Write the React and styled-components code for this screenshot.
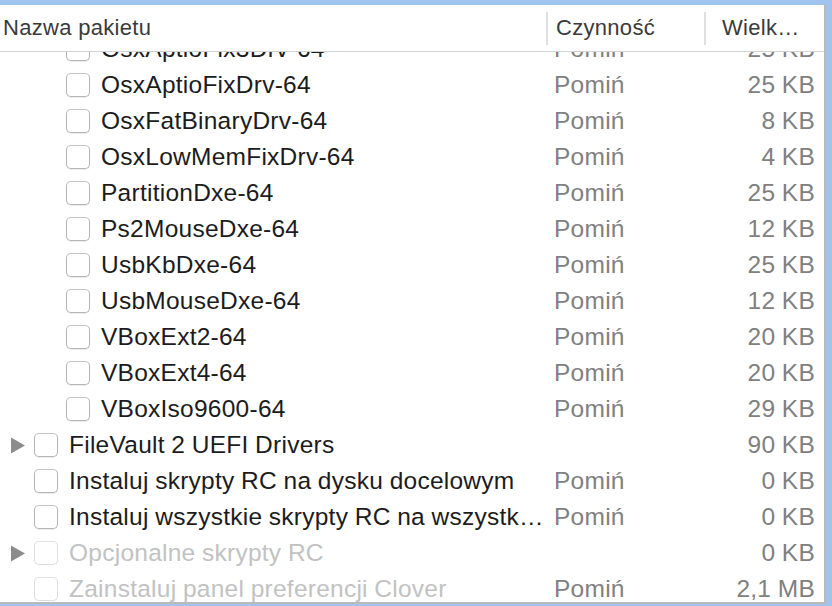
import React, { useLayoutEffect, useRef } from 'react'
import styled, { createGlobalStyle } from 'styled-components'

const GlobalStyle = createGlobalStyle`
  html, body {
    margin: 0;
    padding: 0;
    background: #a0c4ee;
  }
  body {
    font-family: "Liberation Sans", Arial, sans-serif;
    -webkit-font-smoothing: antialiased;
  }
`

const packages = [
  { name: 'OsxAptioFix3Drv-64', action: 'Pomiń', size: '25 KB', level: 2 },
  { name: 'OsxAptioFixDrv-64', action: 'Pomiń', size: '25 KB', level: 2 },
  { name: 'OsxFatBinaryDrv-64', action: 'Pomiń', size: '8 KB', level: 2 },
  { name: 'OsxLowMemFixDrv-64', action: 'Pomiń', size: '4 KB', level: 2 },
  { name: 'PartitionDxe-64', action: 'Pomiń', size: '25 KB', level: 2 },
  { name: 'Ps2MouseDxe-64', action: 'Pomiń', size: '12 KB', level: 2 },
  { name: 'UsbKbDxe-64', action: 'Pomiń', size: '25 KB', level: 2 },
  { name: 'UsbMouseDxe-64', action: 'Pomiń', size: '12 KB', level: 2 },
  { name: 'VBoxExt2-64', action: 'Pomiń', size: '20 KB', level: 2 },
  { name: 'VBoxExt4-64', action: 'Pomiń', size: '20 KB', level: 2 },
  { name: 'VBoxIso9600-64', action: 'Pomiń', size: '29 KB', level: 2 },
  { name: 'FileVault 2 UEFI Drivers', action: '', size: '90 KB', level: 1, group: true },
  { name: 'Instaluj skrypty RC na dysku docelowym', action: 'Pomiń', size: '0 KB', level: 1 },
  { name: 'Instaluj wszystkie skrypty RC na wszystk…', action: 'Pomiń', size: '0 KB', level: 1 },
  { name: 'Opcjonalne skrypty RC', action: '', size: '0 KB', level: 1, group: true, disabled: true },
  { name: 'Zainstaluj panel preferencji Clover', action: 'Pomiń', size: '2,1 MB', level: 1, disabled: true },
]

export default function App() {
  const bodyRef = useRef(null)

  // the list is scrolled a little, so the first row sits under the header
  useLayoutEffect(() => {
    if (bodyRef.current) bodyRef.current.scrollTop = 21
  }, [])

  return (
    <>
      <GlobalStyle />
      <Style.Frame>
        <Style.Window>
          <Style.Header>
            <Style.HeadCell $width="546px" $pad="3px">Nazwa pakietu</Style.HeadCell>
            <Style.HeadCell $width="158px" $pad="10px" $divider>Czynność</Style.HeadCell>
            <Style.HeadCell $flex $pad="18px" $divider>Wielk…</Style.HeadCell>
          </Style.Header>
          <Style.Body ref={bodyRef}>
            {packages.map((p) => (
              <Style.Row key={p.name}>
                <Style.NameCell $level={p.level}>
                  <Style.Disclosure>{p.group ? <Triangle /> : null}</Style.Disclosure>
                  <Style.Checkbox $disabled={p.disabled} />
                  <Style.Name $disabled={p.disabled}>{p.name}</Style.Name>
                </Style.NameCell>
                <Style.ActionCell>{p.action}</Style.ActionCell>
                <Style.SizeCell>{p.size}</Style.SizeCell>
              </Style.Row>
            ))}
          </Style.Body>
        </Style.Window>
      </Style.Frame>
    </>
  )
}

const Triangle = () => (
  <svg width="16" height="17" viewBox="0 0 16 17">
    <path d="M1 0.5 L15 8.5 L1 16.5 Z" fill="#8c8c8c" />
  </svg>
)

const Style = {}

Style.Frame = styled.div`
  width: 832px;
  height: 606px;
  box-sizing: border-box;
  padding: 5px 6px 2px 0;
  background: #a0c4ee;
`

Style.Window = styled.div`
  height: 100%;
  box-sizing: border-box;
  background: #ffffff;
  border-right: 2px solid #bababa;
  border-bottom: 2px solid #bababa;
  display: flex;
  flex-direction: column;
  overflow: hidden;
`

Style.Header = styled.div`
  display: flex;
  height: 46px;
  flex-shrink: 0;
  border-bottom: 1px solid #d2d2d2;
  background: #ffffff;
`

Style.HeadCell = styled.div`
  position: relative;
  box-sizing: border-box;
  ${(p) => (p.$flex ? 'flex: 1;' : `width: ${p.$width}; flex-shrink: 0;`)}
  padding-left: ${(p) => p.$pad};
  display: flex;
  align-items: center;
  font-size: 22px;
  letter-spacing: 0.3px;
  color: #3a3a3a;
  white-space: nowrap;
  &::before {
    content: '';
    display: ${(p) => (p.$divider ? 'block' : 'none')};
    position: absolute;
    left: 0;
    top: 7px;
    bottom: 6px;
    width: 2px;
    background: #e0e0e0;
  }
`

Style.Body = styled.div`
  flex: 1;
  overflow: hidden;
`

Style.Row = styled.div`
  display: flex;
  align-items: center;
  height: 36px;
  font-size: 24.5px;
  letter-spacing: 0.25px;
  word-spacing: -0.5px;
  white-space: nowrap;
`

Style.NameCell = styled.div`
  width: 546px;
  flex-shrink: 0;
  box-sizing: border-box;
  display: flex;
  align-items: center;
  padding-left: ${(p) => 10 + (p.$level - 1) * 32}px;
  overflow: hidden;
`

Style.Disclosure = styled.div`
  width: 24px;
  height: 36px;
  flex-shrink: 0;
  display: flex;
  align-items: center;
`

Style.Checkbox = styled.div`
  width: 22px;
  height: 22px;
  flex-shrink: 0;
  border-radius: 5px;
  border: 1px solid ${(p) => (p.$disabled ? '#dcdcdc' : '#b4b4b4')};
  border-top-color: ${(p) => (p.$disabled ? '#e2e2e2' : '#c4c4c4')};
  background: #ffffff;
  box-shadow: ${(p) => (p.$disabled ? 'none' : '0 1px 1px rgba(0, 0, 0, 0.08)')};
  margin-right: 11px;
`

Style.Name = styled.span`
  color: ${(p) => (p.$disabled ? '#c2c2c2' : '#1c1c1c')};
  overflow: hidden;
`

Style.ActionCell = styled.div`
  width: 158px;
  flex-shrink: 0;
  box-sizing: border-box;
  padding-left: 8px;
  color: #808080;
`

Style.SizeCell = styled.div`
  flex: 1;
  text-align: right;
  padding-right: 9px;
  color: #808080;
`
